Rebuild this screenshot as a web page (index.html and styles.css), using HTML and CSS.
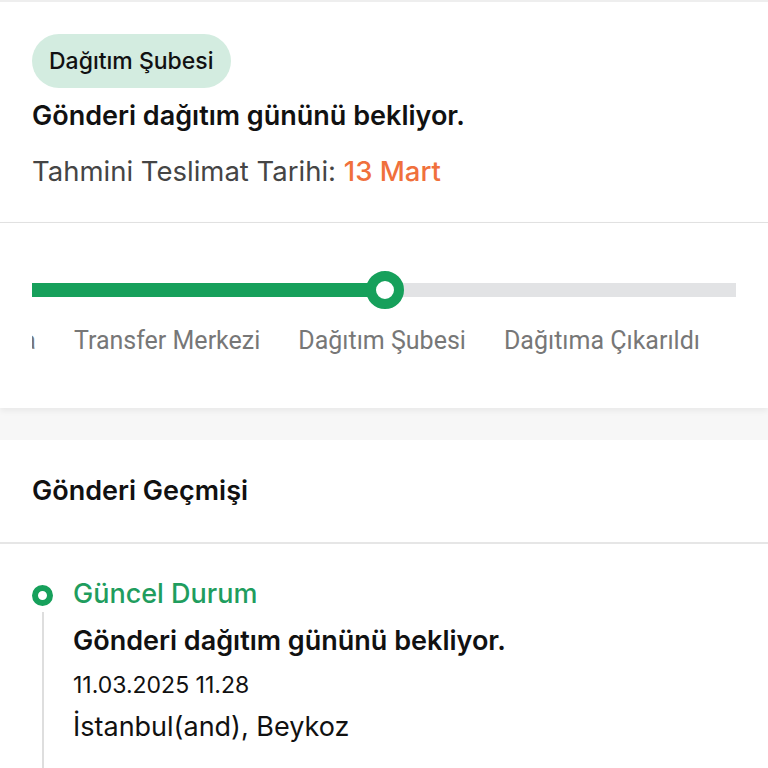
FILE: index.html
```html
<!DOCTYPE html>
<html lang="tr">
<head>
  <meta charset="UTF-8">
  <meta name="viewport" content="width=device-width, initial-scale=1.0">
  <title>Gönderi Takip</title>
  <link rel="stylesheet" href="styles.css">
</head>
<body>
  <div class="summary">
    <span class="badge">Dağıtım Şubesi</span>
    <p class="status">Gönderi dağıtım gününü bekliyor.</p>
    <p class="eta">Tahmini Teslimat Tarihi: <span class="eta-date">13 Mart</span></p>
  </div>

  <div class="progress">
    <div class="track">
      <div class="track-fill" style="width: 353px"></div>
      <span class="track-dot" style="left: 353px"></span>
    </div>
    <div class="steps">
      <div class="steps-row">
        <span>Yolda</span>
        <span>Transfer Merkezi</span>
        <span>Dağıtım Şubesi</span>
        <span>Dağıtıma Çıkarıldı</span>
      </div>
    </div>
  </div>

  <div class="history">
    <h2 class="history-title">Gönderi Geçmişi</h2>
    <div class="timeline">
      <div class="event">
        <div class="event-mark">
          <span class="event-dot"></span>
          <span class="event-line"></span>
        </div>
        <div class="event-body">
          <p class="event-label">Güncel Durum</p>
          <p class="event-title">Gönderi dağıtım gününü bekliyor.</p>
          <p class="event-date">11.03.2025 11.28</p>
          <p class="event-place">İstanbul(and), Beykoz</p>
        </div>
      </div>
    </div>
  </div>
</body>
</html>
```

FILE: styles.css
```css
body {
  margin: 0;
  background-color: #f7f7f7;
  font-family: Inter, "Noto Sans", sans-serif;
  color: #111;
  height: 768px;
  overflow: hidden;
}
p {
  margin: 0;
}

/* ust ozet */
.summary {
  background-color: #fff;
  border-top: 2px solid #eeeeee;
  border-bottom: 1px solid #e2e2e2;
  padding: 32px 32px 34px;
}
.badge {
  display: inline-flex;
  align-items: center;
  height: 54px;
  padding: 0 17px;
  border-radius: 27px;
  background-color: #d3ece0;
  font-size: 23px;
  font-weight: 500;
}
.status {
  margin-top: 11px;
  font-size: 27px;
  line-height: 34px;
  font-weight: 600;
}
.eta {
  margin-top: 21px;
  font-size: 27.5px;
  line-height: 34px;
  color: #454545;
}
.eta-date {
  color: #f0703c;
  font-weight: 500;
}

/* ilerleme cubugu */
.progress {
  background-color: #fff;
  padding: 60px 32px 52px;
  box-shadow: 0 3px 6px rgba(0, 0, 0, 0.06);
  position: relative;
}
.track {
  position: relative;
  height: 14px;
  background-color: #e2e3e5;
}
.track-fill {
  height: 100%;
  background-color: #16a05b;
}
.track-dot {
  position: absolute;
  top: 50%;
  width: 18px;
  height: 18px;
  border: 10px solid #16a05b;
  border-radius: 50%;
  background-color: #fff;
  transform: translate(-50%, -50%);
}
.steps {
  margin-top: 29px;
  overflow: hidden;
}
.steps-row {
  display: flex;
  justify-content: flex-end;
  gap: 38px;
  padding-right: 36px;
  font-family: Roboto, "Liberation Sans", sans-serif;
  font-size: 25px;
  line-height: 30px;
  color: #777;
  white-space: nowrap;
}

/* gecmis */
.history {
  margin-top: 32px;
  background-color: #fff;
  height: 400px;
}
.history-title {
  margin: 0;
  padding: 34px 32px 34px;
  font-size: 27px;
  line-height: 34px;
  font-weight: 600;
  border-bottom: 2px solid #e6e6e6;
}
.timeline {
  padding: 33px 32px 0;
}
.event {
  display: flex;
  gap: 20px;
}
.event-mark {
  display: flex;
  flex-direction: column;
  align-items: center;
  width: 21px;
  padding-top: 8px;
}
.event-dot {
  width: 9px;
  height: 9px;
  border: 6px solid #16a05b;
  border-radius: 50%;
}
.event-line {
  width: 2px;
  height: 200px;
  margin-top: 6px;
  background-color: #dedede;
}
.event-label {
  font-size: 27px;
  line-height: 34px;
  font-weight: 500;
  color: #1f9d5e;
}
.event-title {
  margin-top: 13px;
  font-size: 27px;
  line-height: 34px;
  font-weight: 600;
}
.event-date {
  margin-top: 12px;
  font-size: 23px;
  line-height: 30px;
}
.event-place {
  margin-top: 10px;
  font-size: 27px;
  line-height: 34px;
}
```
